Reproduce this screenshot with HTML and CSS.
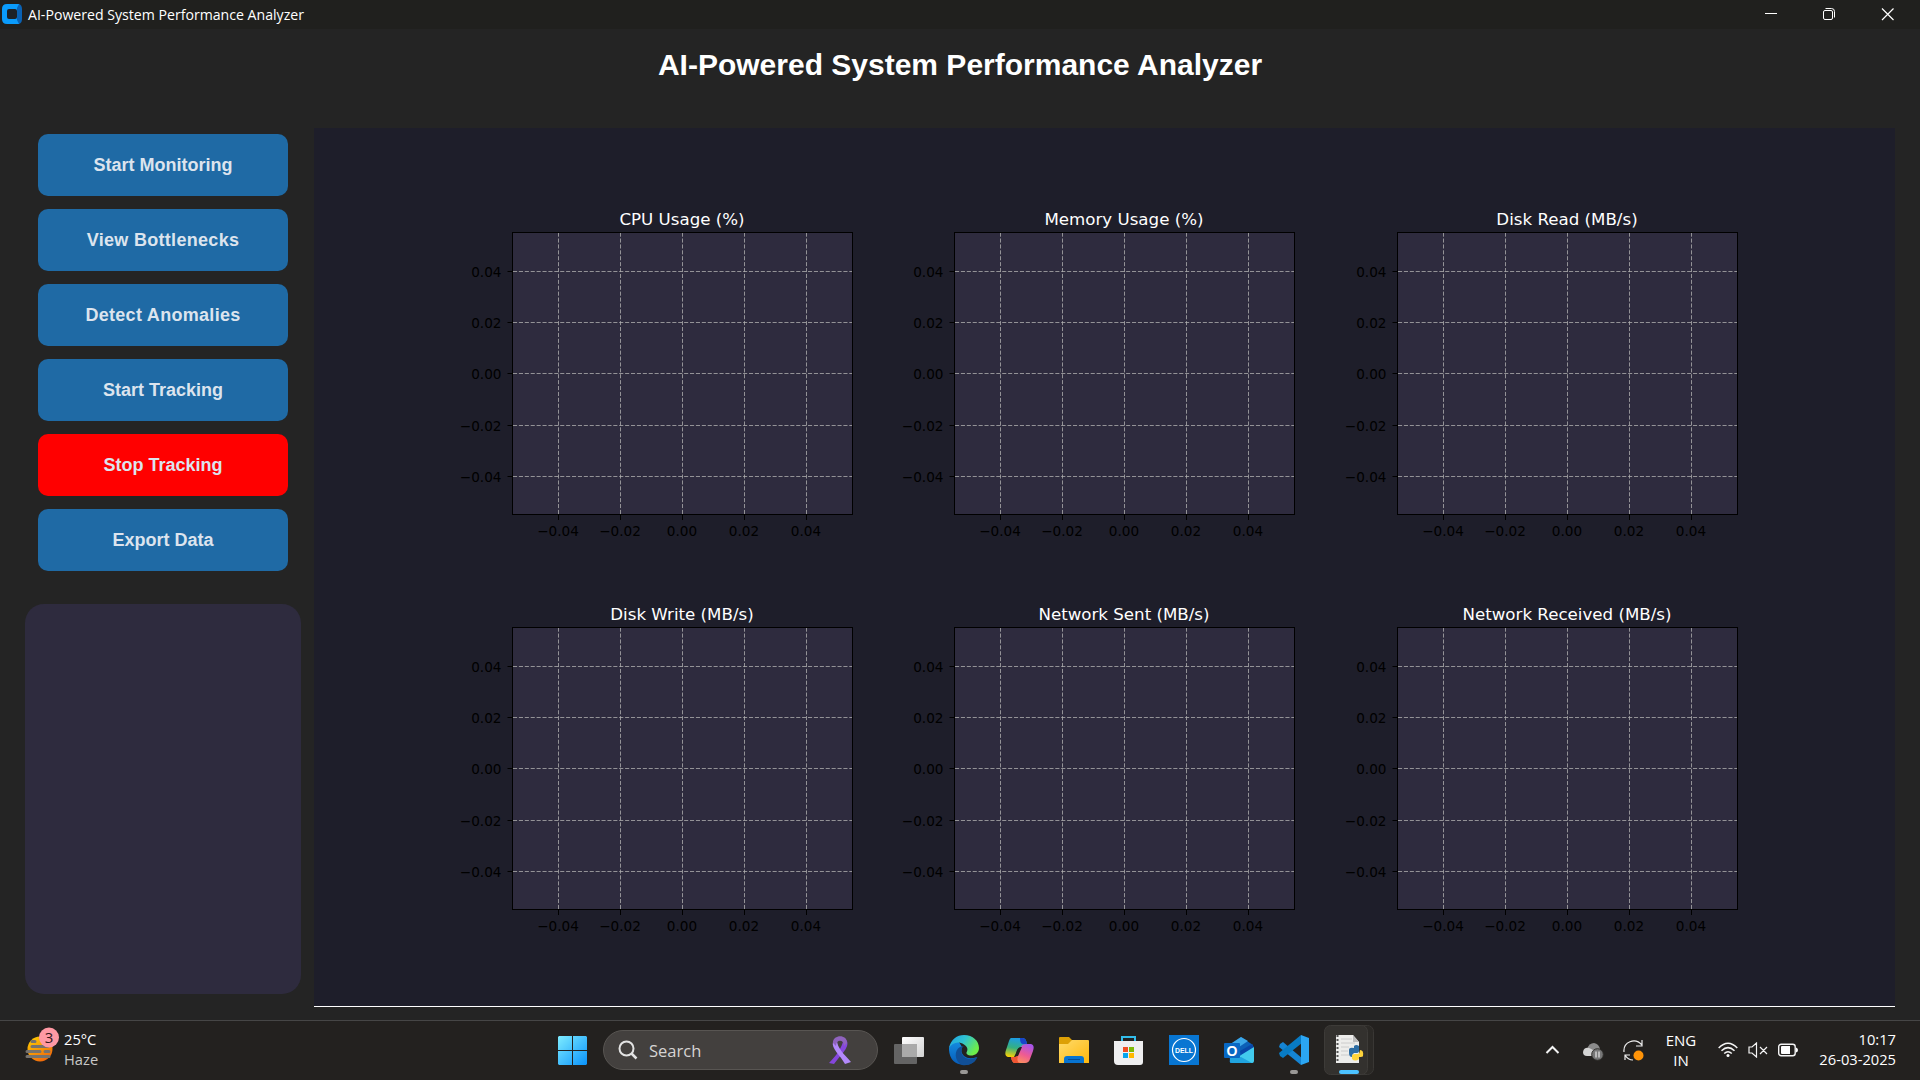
FILE: index.html
```html
<!DOCTYPE html>
<html lang="en">
<head>
<meta charset="utf-8">
<title>AI-Powered System Performance Analyzer</title>
<link rel="stylesheet" href="styles.css">
</head>
<body>
<div class="desktop">
  <header class="titlebar">
    <svg class="app-icon" width="20" height="20" viewBox="0 0 20 20"><path d="M5 0H17V20H5Q0 20 0 15V5Q0 0 5 0Z" fill="#0a9bfb"/><path d="M15 4 17 0Q20 1 20 5V15Q20 19 17 20L15 16Z" fill="#0a62b4"/><rect x="5" y="5" width="10" height="10" rx="2" fill="#1d2227"/></svg>
    <svg class="app-name" width="320" height="29"><text x="0" y="20" textLength="276" lengthAdjust="spacingAndGlyphs">AI-Powered System Performance Analyzer</text></svg>
    <div class="window-controls">
      <svg width="58" height="28"><path d="M23 13.5H35" stroke="#fff"/></svg>
      <svg width="58" height="28" fill="none" stroke="#fff"><rect x="23.5" y="10.5" width="9" height="9" rx="1.5"/><path d="M25.5 8.5H31.5Q34.500 8.500 34.500 11.500V17.5"/></svg>
      <svg width="60" height="28"><path d="M24 8.500 35.500 20M35.500 8.500 24 20" stroke="#fff" stroke-width="1.200"/></svg>
    </div>
  </header>
  <h1 class="heading">AI-Powered System Performance Analyzer</h1>
  <main class="workspace">
    <aside class="sidebar">
      <nav class="actions">
        <button class="action">Start Monitoring</button>
        <button class="action action-wide">View Bottlenecks</button>
        <button class="action action-wide">Detect Anomalies</button>
        <button class="action">Start Tracking</button>
        <button class="action action-stop">Stop Tracking</button>
        <button class="action">Export Data</button>
      </nav>
      <section class="log"></section>
    </aside>
    <section class="charts" id="charts"></section>
  </main>
  <footer class="taskbar">
    <div class="weather">
      <svg width="36" height="40" viewBox="0 0 36 40">
        <defs><linearGradient id="sun" x1="0" y1="0" x2=".6" y2="1"><stop offset="0" stop-color="#ffd400"/><stop offset="1" stop-color="#f26a0a"/></linearGradient></defs>
        <circle cx="16" cy="22" r="12.500" fill="url(#sun)"/>
        <path d="M8 14.500H11M8 19.500H24M3 24.500H16M21 24.500H25M3 29.500H25" stroke="#77736e" stroke-width="3" stroke-linecap="round"/>
        <circle cx="25" cy="10.500" r="10" fill="#ff99a4"/><text class="badge" x="25" y="16" text-anchor="middle">3</text>
      </svg>
      <div class="weather-text"><span>25°C</span><span class="dim">Haze</span></div>
    </div>
    <div class="apps">
      <svg class="start" width="30" height="30" viewBox="0 0 30 30">
        <defs><linearGradient id="win" x1="0" y1="0" x2="1" y2="1"><stop stop-color="#7eecff"/><stop offset="1" stop-color="#0a93fb"/></linearGradient></defs>
        <path d="M1 0H14V14H0V1ZM15 0H28L29 1V14H15ZM0 15H14V29H1L0 28ZM15 15H29V28L28 29H15Z" fill="url(#win)"/>
      </svg>
      <div class="search">
        <svg width="20" height="20" viewBox="0 0 20 20" fill="none" stroke="#e3e3e3" stroke-width="2"><circle cx="8.500" cy="8.500" r="7"/><path d="M13.500 13.500 18.500 18.500" stroke-width="2.500"/></svg>
        <span class="search-label">Search</span>
        <svg class="ribbon" width="22" height="30" viewBox="0 0 22 30">
          <path d="M15 3C22 7 17 15 12 20L5 29 0 28C7 21 13 13 15 3Z" fill="#8546dc"/><path d="M4 7C2 13 11 20 16 29L22 27C15 19 8 13 8 5Z" fill="#b389fb"/><path d="M4 8C3 0 18-2 18 8L15 11C15 4 7 4 7 11Z" fill="#8f63bd"/>
        </svg>
      </div>
      <svg class="task-view" width="32" height="30" viewBox="0 0 32 30"><defs><linearGradient id="tv" x1="0" y1="0" x2="1" y2="1"><stop stop-color="#fff"/><stop offset="1" stop-color="#d2d2d2"/></linearGradient></defs><rect x="8" y="1" width="22" height="20" rx="1" fill="url(#tv)"/><rect x="0" y="8" width="23" height="20" rx="1" fill="#646464"/><path d="M8 8H23V21H8Z" fill="#aaa"/></svg>
      <svg class="edge" width="32" height="42" viewBox="0 0 32 42">
        <defs><linearGradient id="eg" x1="0" y1="0" x2="1" y2=".5"><stop stop-color="#1ca0e8"/><stop offset=".5" stop-color="#30c3d0"/><stop offset="1" stop-color="#6ded4a"/></linearGradient><linearGradient id="eb" x1="0" y1="0" x2="0" y2="1"><stop stop-color="#148be0"/><stop offset="1" stop-color="#075bb7"/></linearGradient></defs>
        <path d="M0 13C1 9 5 6 10 7L13 12Q11 17 15 21 20 25 28 22 25 30 15 30 1 29 0 15Z" fill="url(#eb)"/>
        <path d="M11 12C5 15 5 26 13 30 20 31 26 28 28.500 22 22 26 15 24 13 19 12 16 12 13 15 11Z" fill="#114f96"/>
        <path d="M0 13C2 4 8 0 15 0 24 0 30 6 30 13 30 18 26 20.500 22 20.500 19 20.500 17 19 17.500 17.500 19 15 19 12 15 9.500 9 5.500 3 8 0 13Z" fill="url(#eg)"/>
        <rect x="11" y="35" width="8" height="4" rx="2" fill="#9a9896"/>
      </svg>
      <svg class="copilot" width="30" height="28" viewBox="0 0 30 28">
        <defs><linearGradient id="ca" x1=".4" y1="0" x2=".2" y2="1"><stop stop-color="#1d9de4"/><stop offset=".5" stop-color="#35b080"/><stop offset="1" stop-color="#ffd200"/></linearGradient><linearGradient id="cb" x1=".7" y1="0" x2=".2" y2="1"><stop stop-color="#a855e8"/><stop offset=".5" stop-color="#ef5b92"/><stop offset="1" stop-color="#ff9b55"/></linearGradient></defs>
        <path d="M6 1H18Q21 1 22 7L19 11H15Q12 11 11 16L9 20H3Q-1 19 1 13L4 4Q5 1 6 1Z" fill="url(#ca)"/><path d="M13 1H18Q21 1 22 7H18Q15 7 15 1Z" fill="#1744c9"/><path d="M22 7H26Q30 8 28 14L25 22Q24 26 20 26H10Q7 26 6 20H10Q13 20 14 15L16 10Q17 7 22 7Z" fill="url(#cb)"/><path d="M6 20H10L13 19Q11 26 16 26H10Q7 26 6 20Z" fill="#f05532"/><path d="M15 10H17L13 19H10.500L12 14Q13 10.500 15 10Z" fill="#24211f"/>
      </svg>
      <svg class="folder" width="30" height="28" viewBox="0 0 30 28"><defs><linearGradient id="fo" x1="0" y1="0" x2="1" y2="1"><stop stop-color="#ffdb6b"/><stop offset="1" stop-color="#ffb80d"/></linearGradient></defs><path d="M0 1Q0 0 1 0H10L13 3H29V10H0Z" fill="#dda006"/><path d="M0 7H9L13 3H29Q30 3 30 4V26H0Z" fill="url(#fo)"/><path d="M5 26V22Q5 19 8 19H22Q25 19 25 22V26Z" fill="#0874d1"/><path d="M9 22.500H21" stroke="#064d97"/></svg>
      <svg class="store" width="30" height="30" viewBox="0 0 30 30"><path d="M8 7V1H21V7" fill="none" stroke="#32bdea" stroke-width="2"/><path d="M0 5H29V26Q29 29 26 29H4Q0 29 0 25Z" fill="#efeff0"/><path d="M9 11H14V16H9Z" fill="#f04e23"/><path d="M15 11H20V16H15Z" fill="#7dba08"/><path d="M9 17H14V22H9Z" fill="#05a4ee"/><path d="M15 17H20V22H15Z" fill="#ffb900"/></svg>
      <svg class="dell" width="30" height="30" viewBox="0 0 30 30"><rect width="30" height="30" fill="#0876d2"/><circle cx="15" cy="15" r="11.500" fill="none" stroke="#fff" stroke-width="1.200"/><text class="dell-text" x="15" y="18" text-anchor="middle" textLength="18" lengthAdjust="spacingAndGlyphs">DELL</text></svg>
      <svg class="outlook" width="30" height="27" viewBox="0 0 30 27"><path d="M5 8 17 0 29 8V26H6Z" fill="#0c60b7"/><path d="M5 8 17 0 24 4 9 14H5Z" fill="#3ba7e8"/><path d="M16 14 28 7 30 10 17 19Z" fill="#0847a7"/><path d="M17 18 30 10V24Q30 26 28 26H8Z" fill="#42cbed"/><path d="M6 20H17L28 26H8Q5 26 6 23Z" fill="#20a4df"/><rect x="0" y="6" width="16" height="15" rx="1" fill="#0868c4"/><text class="outlook-text" x="8" y="19" text-anchor="middle">O</text></svg>
      <svg class="code" width="30" height="42" viewBox="0 0 30 42"><path d="M1 9 4 7 24 24 22 30 0 12Z" fill="#1584d3"/><path d="M0 18 22 0 23 8 4 23 1 21Z" fill="#087bc4"/><path d="M22 0 30 3V27L22 30Z" fill="#2ba6f3"/><rect x="11" y="35" width="8" height="4" rx="2" fill="#9a9896"/></svg>
      <div class="python-tile">
        <svg width="50" height="50" viewBox="0 0 50 50"><rect x="30" y=".5" width="19.500" height="49" rx="6" fill="#2b2926" stroke="#393734"/><rect x=".5" y=".5" width="43" height="49" rx="6" fill="#33312e" stroke="#3d3b38"/>
        <path d="M12 10H29L35 17V38H12Z" fill="#ededeb"/><path d="M29 10V17H35Z" fill="#bbb"/><path d="M13.500 10V38" stroke="#555" stroke-width="2" stroke-dasharray="2 2"/><path d="M17 14H28M17 18H31M17 22H25M17 26H24M17 30H25" stroke="#ccc"/>
        <path d="M25 25Q25 22 30 23V21Q32 19 35 21V26Q35 28 32 28H30Q28 29 28 32 25 32 25 28Z" fill="#2d6da3"/><path d="M36 25Q40 25 39 31 39 32 35 32V34Q31 37 28 34V31Q28 29 31 29H34Q36 28 36 25Z" fill="#ffd43b"/>
        <rect x="15" y="45" width="20" height="4" rx="2" fill="#4cc2ff"/></svg>
      </div>
    </div>
    <div class="tray">
      <svg class="chevron" width="16" height="10" viewBox="0 0 16 10" fill="none" stroke="#f3f3f3" stroke-width="2"><path d="M1.500 8 7.500 2 13.500 8"/></svg>
      <svg class="cloud" width="22" height="18" viewBox="0 0 22 18"><path d="M4 6Q6 0 11 0 16 1 17 6L14 13H5Z" fill="#8b8b8b"/><path d="M0 9Q1 4 6 5 9 6 16 11V13H4Q0 13 0 9Z" fill="#d4d4d4"/><circle cx="14.500" cy="11.500" r="5.800" fill="#777" stroke="#302f2c"/><path d="M13 8.500V14.500M16 8.500V14.500" stroke="#fff"/></svg>
      <svg class="sync" width="22" height="22" viewBox="0 0 22 22" fill="none" stroke="#eee" stroke-width="1.200"><path d="M1 12C0 2 12-3 19 5M19 0V6H13M10 20Q5 20 2 15M2 20V15H7"/><circle cx="15.500" cy="15.500" r="5" fill="#ff9408" stroke="none"/></svg>
      <div class="language"><span>ENG</span><span>IN</span></div>
      <svg class="wifi" width="20" height="16" viewBox="0 0 20 16" fill="none" stroke="#f4f4f4" stroke-width="1.500"><path d="M.7 6Q10-3.500 19.300 6M3.500 8.800Q10 2.500 16.500 8.800M6.200 11.500Q10 8 13.800 11.500"/><circle cx="10" cy="13.500" r="1.500" fill="#fff" stroke="none"/></svg>
      <svg class="volume" width="20" height="16" viewBox="0 0 20 16" fill="none" stroke="#f4f4f4" stroke-width="1.200"><path d="M1 5H4L8.500 1V15L4 11H1ZM12 5 19 12M19 5 12 12"/></svg>
      <svg class="battery" width="21" height="14" viewBox="0 0 21 14"><rect x=".7" y="1.200" width="16.500" height="11.500" rx="2.500" fill="none" stroke="#f4f4f4" stroke-width="1.400"/><path d="M3 4Q3 3 4 3H12V11H4Q3 11 3 10ZM18 4.500Q20 5 20 7 20 9 18 9.500Z" fill="#fff"/></svg>
      <div class="clock"><span>10:17</span><span>26-03-2025</span></div>
    </div>
  </footer>
</div>
<script src="charts.js"></script>
</body>
</html>
```
FILE: styles.css
```css
* { box-sizing: border-box; }
body { margin: 0; background: #242424; color: #fff; font-family: "Open Sans", "Noto Sans", sans-serif; overflow: hidden; }
svg { display: block; flex: none; }
.desktop { width: 1920px; height: 1080px; display: flex; flex-direction: column; }
.titlebar { height: 29px; background: #20201e; display: flex; align-items: flex-start; padding: 0 2px; }
.app-icon { margin-top: 4px; }
.app-name { margin-left: 6px; fill: #fff; font-size: 14.5px; overflow: visible; }
.window-controls { margin-left: auto; display: flex; }
.heading { margin: 0; height: 99px; padding-top: 18px; text-align: center; font: bold 30px/36px "Liberation Sans", sans-serif; }
.workspace { height: 892px; display: flex; }
.sidebar { width: 314px; padding: 6px 13px 0 25px; }
.actions { display: flex; flex-direction: column; gap: 13px; padding: 0 13px; }
.action { height: 62px; border: 0; border-radius: 10px; background: #1f6aa5; color: #dce4ee; font: bold 18px "Liberation Sans", sans-serif; padding: 0; }
.action-wide { letter-spacing: .3px; }
.action-stop { background: #ff0000; }
.log { margin-top: 33px; height: 390px; border-radius: 19px; background: #2e2b3e; }
.charts { width: 1581px; height: 879px; background: #1e1e2a; border-bottom: 1px solid #fff; display: grid; grid-template-columns: 442px 443px 442px; grid-template-rows: 395px 395px; padding: 64px 0 0 128px; }
.frame { fill: #2e2b3e; stroke: #000; }
.frame-outline { fill: none; }
.grid-line { stroke: #b0b0b0; stroke-opacity: .78; stroke-dasharray: 4.1 1.8; }
.tick { stroke: #000; }
.chart-title { font: 16.67px "DejaVu Sans", sans-serif; fill: #fff; text-anchor: middle; }
.tick-label { font: 13.6px "DejaVu Sans", sans-serif; fill: #000; text-anchor: middle; }
.tick-label.y { text-anchor: end; }
.taskbar { height: 60px; background: #23211f; border-top: 1px solid #464646; display: grid; grid-template-columns: 556px 1fr 372px; font-size: 14.7px; line-height: 20px; }
.weather { display: flex; padding: 6px 0 0 24px; gap: 4px; }
.weather-text { display: flex; flex-direction: column; padding-top: 2px; }
.dim { color: #c8c8c6; }
.badge { font-size: 15px; fill: #32171b; }
.apps { display: flex; align-items: flex-start; }
.start { margin: 15px 0 0 2px; }
.search { margin: 9px 0 0 15px; width: 275px; height: 40px; border-radius: 20px; background: #43403e; border: 1px solid #585552; display: flex; align-items: center; padding: 0 26px 0 14px; }
.search-label { margin: 1px 0 0 11px; font-size: 16.5px; color: #d6d4d3; }
.ribbon { margin-left: auto; }
.task-view { margin: 15px 0 0 16px; }
.edge { margin: 14px 0 0 23px; }
.copilot { margin: 16px 0 0 24px; }
.folder { margin: 16px 0 0 24px; }
.store { margin: 15px 0 0 25px; }
.dell { margin: 14px 0 0 25px; }
.dell-text { font: bold 8px "Liberation Sans", sans-serif; fill: #fff; }
.outlook { margin: 16px 0 0 25px; }
.outlook-text { font: bold 14px "Liberation Sans", sans-serif; fill: #fff; }
.code { margin: 14px 0 0 25px; }
.python-tile { margin: 4px 0 0 15px; }
.tray { display: flex; align-items: flex-start; }
.chevron { margin: 24px 0 0 -3px; }
.cloud { margin: 22px 0 0 22px; }
.sync { margin: 19px 0 0 18px; }
.language { margin: 9px 0 0 17px; width: 38px; display: flex; flex-direction: column; align-items: center; font-size: 15px; }
.wifi { margin: 21px 0 0 18px; }
.volume { margin: 21px 0 0 10px; }
.battery { margin: 22px 0 0 10px; }
.clock { margin: 8px 24px 0 auto; display: flex; flex-direction: column; align-items: flex-end; }
```
FILE: charts.js
```js
const titles = ["CPU Usage (%)", "Memory Usage (%)", "Disk Read (MB/s)", "Disk Write (MB/s)", "Network Sent (MB/s)", "Network Received (MB/s)"];
const xs = [[116.5, "−0.04"], [178.5, "−0.02"], [240.5, "0.00"], [302.5, "0.02"], [364.5, "0.04"]];
const ys = [[79.5, "0.04"], [130.5, "0.02"], [181.5, "0.00"], [233.5, "−0.02"], [284.5, "−0.04"]];

// Plot area spans 70.5..410.5 by 40.5..322.5 inside every cell.
document.getElementById("charts").innerHTML = titles.map(title => {
  const columns = xs.map(([x, label]) =>
    `<path class="grid-line" d="M${x} 322V41"/><path class="tick" d="M${x} 323V328"/><text class="tick-label" x="${x - 0.5}" y="344">${label}</text>`).join("");
  const rows = ys.map(([y, label]) =>
    `<path class="grid-line" d="M71 ${y}H410"/><path class="tick" d="M65.5 ${y}H70"/><text class="tick-label y" x="59.5" y="${y + 5.5}">${label}</text>`).join("");
  return `<svg width="442" height="394"><rect class="frame" x="70.5" y="40.5" width="340" height="282"/>${columns}${rows}<rect class="frame frame-outline" x="70.5" y="40.5" width="340" height="282"/><text class="chart-title" x="240" y="32.5">${title}</text></svg>`;
}).join("");
```
